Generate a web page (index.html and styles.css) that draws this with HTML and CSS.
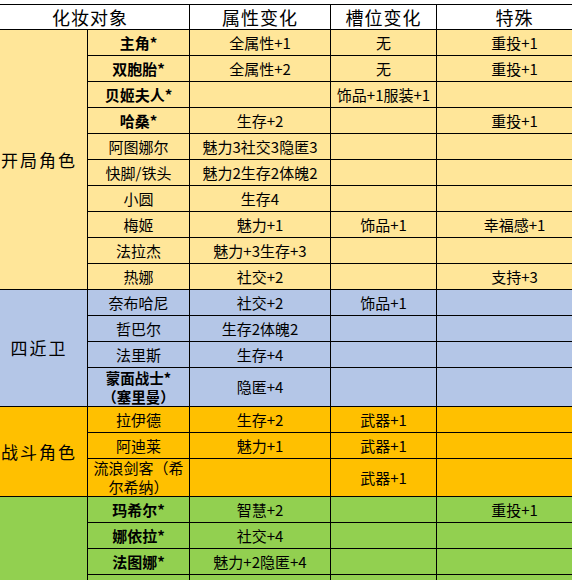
FILE: index.html
```html
<!DOCTYPE html>
<html lang="zh">
<head>
<meta charset="utf-8">
<link rel="stylesheet" href="styles.css">
</head>
<body>
<table class="grid">
  <colgroup>
    <col class="c-group"><col class="c-name"><col class="c-attr"><col class="c-slot"><col class="c-special">
  </colgroup>
  <thead>
    <tr class="head">
      <th colspan="2">化妆对象</th>
      <th>属性变化</th>
      <th>槽位变化</th>
      <th>特殊</th>
    </tr>
  </thead>
  <tbody class="yellow">
    <tr><td class="group" rowspan="10">开局角色</td><td class="b">主角*</td><td>全属性+1</td><td>无</td><td>重投+1</td></tr>
    <tr><td class="b">双胞胎*</td><td>全属性+2</td><td>无</td><td>重投+1</td></tr>
    <tr><td class="b">贝姬夫人*</td><td></td><td>饰品+1服装+1</td><td></td></tr>
    <tr><td class="b">哈桑*</td><td>生存+2</td><td></td><td>重投+1</td></tr>
    <tr><td>阿图娜尔</td><td>魅力3社交3隐匿3</td><td></td><td></td></tr>
    <tr><td>快脚/铁头</td><td>魅力2生存2体魄2</td><td></td><td></td></tr>
    <tr><td>小圆</td><td>生存4</td><td></td><td></td></tr>
    <tr><td>梅姬</td><td>魅力+1</td><td>饰品+1</td><td>幸福感+1</td></tr>
    <tr><td>法拉杰</td><td>魅力+3生存+3</td><td></td><td></td></tr>
    <tr><td>热娜</td><td>社交+2</td><td></td><td>支持+3</td></tr>
  </tbody>
  <tbody class="blue">
    <tr><td class="group" rowspan="4">四近卫</td><td>奈布哈尼</td><td>社交+2</td><td>饰品+1</td><td></td></tr>
    <tr><td>哲巴尔</td><td>生存2体魄2</td><td></td><td></td></tr>
    <tr><td>法里斯</td><td>生存+4</td><td></td><td></td></tr>
    <tr class="tall"><td class="b two-b">蒙面战士*<br>（塞里曼）</td><td>隐匿+4</td><td></td><td></td></tr>
  </tbody>
  <tbody class="orange">
    <tr><td class="group" rowspan="3">战斗角色</td><td>拉伊德</td><td>生存+2</td><td>武器+1</td><td></td></tr>
    <tr><td>阿迪莱</td><td>魅力+1</td><td>武器+1</td><td></td></tr>
    <tr class="tall"><td class="wrap two">流浪剑客（希尔希纳）</td><td></td><td>武器+1</td><td></td></tr>
  </tbody>
  <tbody class="green">
    <tr><td class="group" rowspan="4"></td><td class="b">玛希尔*</td><td>智慧+2</td><td></td><td>重投+1</td></tr>
    <tr><td class="b">娜依拉*</td><td>社交+4</td><td></td><td></td></tr>
    <tr><td class="b">法图娜*</td><td>魅力+2隐匿+4</td><td></td><td></td></tr>
    <tr><td class="b">艾尔莎*</td><td>魅力+2生存+2</td><td></td><td></td></tr>
  </tbody>
</table>
</body>
</html>
```

FILE: styles.css
```css
html, body {
  margin: 0;
  padding: 0;
  background: #ffffff;
  overflow: hidden;
}
body {
  font-family: "Noto Sans CJK SC", "Noto Sans", sans-serif;
  color: #000;
}
.grid {
  border-collapse: collapse;
  table-layout: fixed;
  width: 602px;
  margin: 4px 0 0 -10px;
}
.c-group { width: 97px; }
.c-name { width: 102px; }
.c-attr { width: 141px; }
.c-slot { width: 106px; }
.c-special { width: 156px; }

.grid th, .grid td {
  border: 1px solid #000;
  padding: 0;
  text-align: center;
  vertical-align: middle;
  font-size: 15px;
  line-height: 18px;
  white-space: nowrap;
  overflow: hidden;
}
.grid tr { height: 26px; }
.grid tr.head { height: 25px; }
.grid tr.tall { height: 38px; }
.grid th {
  font-weight: normal;
  font-size: 18px;
  letter-spacing: 1px;
  background: #ffffff;
  border-top: 1px solid #000;
}
.grid td.b { font-weight: bold; }
.grid td.two { line-height: 18.5px; }
.grid td.two-b { line-height: 19px; font-size: 14.5px; }
.grid td.wrap { white-space: normal; }
.grid td.group {
  font-size: 17px;
  letter-spacing: 2px;
}
.yellow td { background: #ffe699; }
.blue td { background: #b4c6e7; }
.orange td { background: #ffc000; }
.green td { background: #92d050; }
```
